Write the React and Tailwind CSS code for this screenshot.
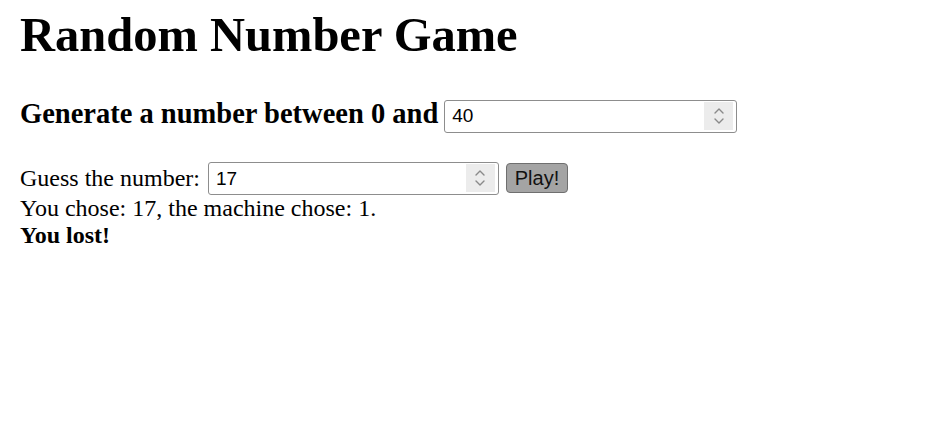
import { useState } from 'react';

const Spinner = () => (
  <div className="flex h-[28px] w-[29px] flex-col items-center justify-center gap-[4px] bg-[#ececec]">
    <svg width="10" height="6" viewBox="0 0 10 6" fill="none">
      <path d="M1 5 L5 1 L9 5" stroke="#8a8a8a" strokeWidth="1.4" strokeLinecap="round" strokeLinejoin="round" />
    </svg>
    <svg width="10" height="6" viewBox="0 0 10 6" fill="none">
      <path d="M1 1 L5 5 L9 1" stroke="#8a8a8a" strokeWidth="1.4" strokeLinecap="round" strokeLinejoin="round" />
    </svg>
  </div>
);

const NumberBox = ({ value, onChange, className }) => (
  <div className={`flex h-[33px] items-center rounded-[3px] border border-[#8d8d8d] bg-white pl-[7px] pr-[3px] ${className}`}>
    <input
      value={value}
      onChange={e => onChange(e.target.value)}
      className="min-w-0 flex-1 bg-transparent text-[19px] text-black outline-none"
      style={{ fontFamily: "'Liberation Sans', Arial, sans-serif" }}
    />
    <Spinner />
  </div>
);

export default function App() {
  const [max, setMax] = useState('40');
  const [guess, setGuess] = useState('17');
  const [result, setResult] = useState({ you: 17, machine: 1 });

  const play = () => {
    const machine = Math.floor(Math.random() * (Number(max) + 1));
    setResult({ you: Number(guess), machine });
  };

  return (
    <div className="min-h-screen bg-white pl-[20px] text-black" style={{ fontFamily: "'Liberation Serif', 'Times New Roman', serif" }}>
      <h1 className="pt-[11px] text-[48.5px] font-bold leading-none">Random Number Game</h1>

      {/* range */}
      <div className="mt-[40px] flex items-start gap-[6px]">
        <h3 className="text-[28.5px] font-bold leading-none">Generate a number between 0 and</h3>
        <NumberBox value={max} onChange={setMax} className="w-[293px]" />
      </div>

      {/* guess */}
      <div className="mt-[29px] flex items-center text-[24px] leading-[27px]">
        <span className="mr-[8px]">Guess the number:</span>
        <NumberBox value={guess} onChange={setGuess} className="w-[291px]" />
        <button
          onClick={play}
          className="ml-[7px] h-[30px] w-[62px] rounded-[4px] border border-[#6f6f6f] bg-[#a4a4a4] text-[20px] text-[#111]"
          style={{ fontFamily: "'Liberation Sans', Arial, sans-serif" }}
        >
          Play!
        </button>
      </div>
      <div className="text-[24px] leading-[27px]">
        You chose: {result.you}, the machine chose: {result.machine}.
      </div>
      <div className="text-[24px] font-bold leading-[27px]">
        {result.you === result.machine ? 'You won!' : 'You lost!'}
      </div>
    </div>
  );
}
